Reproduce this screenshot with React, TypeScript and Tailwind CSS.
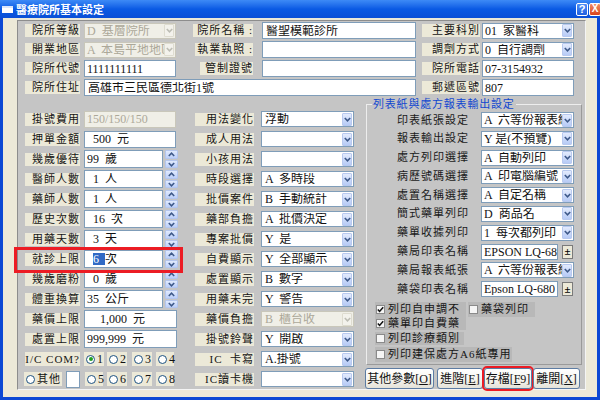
import React from 'react';

type FP = {
  v?: React.ReactNode;
  className?: string;
  dis?: boolean;
  sel?: boolean;
  pad?: string;
};

function Lbl({ t, className = '' }: { t: string; className?: string }) {
  return (
    <div
      className={`h-[13px] shrink-0 bg-[#ece9d8] flex items-center justify-end text-[11px] leading-none tracking-[1px] text-[#151515] whitespace-pre ${className}`}
    >
      {t}
    </div>
  );
}

function Chev({ up = false, dis = false }: { up?: boolean; dis?: boolean }) {
  return (
    <svg width="7" height="5" viewBox="0 0 7 5">
      <polyline
        points={up ? '0.8,4 3.5,1.2 6.2,4' : '0.8,1 3.5,3.8 6.2,1'}
        fill="none"
        stroke={dis ? '#bdbdb4' : '#3f5a8a'}
        strokeWidth="1.6"
      />
    </svg>
  );
}

function Field({ v = '', className = '', dis = false, sel = false, pad = 'pl-[2px]' }: FP) {
  return (
    <div
      className={`shrink-0 border flex items-center overflow-hidden ${
        dis ? 'bg-[#f0efe7] text-[#aca899] border-[#c9c7ba]' : 'bg-white text-[#111] border-[#7f9db9]'
      } ${className}`}
    >
      <div className={`flex-1 min-w-0 overflow-hidden whitespace-pre text-[12px] leading-none ${pad}`}>{v}</div>
      {sel && (
        <div
          className={`w-[10px] h-[13px] mr-[1px] shrink-0 flex items-center justify-center rounded-[1px] ${
            dis ? 'bg-[#f3f2ec] border border-[#dedcd0]' : 'bg-gradient-to-b from-[#e3ebfd] to-[#b7cbf6] border border-[#b8c9ef]'
          }`}
        >
          <Chev dis={dis} />
        </div>
      )}
    </div>
  );
}

function Spin() {
  return (
    <div className="ml-[2px] flex flex-col gap-[1px] shrink-0">
      <div className="w-[13px] h-[9px] rounded-[1px] bg-gradient-to-b from-[#e1eafd] to-[#bccff8] border border-[#b4c6ee] flex items-center justify-center">
        <Chev up />
      </div>
      <div className="w-[13px] h-[8px] rounded-[1px] bg-gradient-to-b from-[#e1eafd] to-[#bccff8] border border-[#b4c6ee] flex items-center justify-center">
        <Chev />
      </div>
    </div>
  );
}

function Radio({ n, on = false, className = '' }: { n: string; on?: boolean; className?: string }) {
  return (
    <div className={`h-[14px] shrink-0 bg-[#ece9d8] flex items-center pl-[2px] ${className}`}>
      <span className="w-[9px] h-[9px] rounded-full border border-[#1c5180] bg-white flex items-center justify-center shrink-0">
        {on && <span className="w-[4px] h-[4px] rounded-full bg-[#21a121]" />}
      </span>
      <span className="ml-[2px] text-[12px] leading-none text-[#111] whitespace-pre">{n}</span>
    </div>
  );
}

function CB({ t, on = false, className = '' }: { t: string; on?: boolean; className?: string }) {
  return (
    <div className={`shrink-0 bg-[#b8b8b8] flex items-center pl-[1px] ${className}`}>
      <span className="w-[9px] h-[9px] border border-[#8a8a8a] bg-[#f5f5f5] flex items-center justify-center shrink-0">
        {on && (
          <svg width="7" height="7" viewBox="0 0 7 7">
            <polyline points="0.8,3.4 2.6,5.4 6.2,1.2" fill="none" stroke="#111" strokeWidth="1.5" />
          </svg>
        )}
      </span>
      <span className="ml-[3px] text-[11px] leading-none tracking-[1px] text-[#151515] whitespace-pre">{t}</span>
    </div>
  );
}

function Btn({ children, className = '' }: { children: React.ReactNode; className?: string }) {
  return (
    <div
      className={`h-[21px] shrink-0 rounded-[3px] border border-[#5d7ca3] bg-gradient-to-b from-white via-[#f7f6f1] to-[#e4e2d8] flex items-center justify-center text-[12px] leading-none text-[#111] whitespace-pre ${className}`}
    >
      {children}
    </div>
  );
}

const mid: [string, string, boolean?][] = [
  ['用法變化', '浮動'],
  ['成人用法', ''],
  ['小孩用法', ''],
  ['時段選擇', 'A  多時段'],
  ['批價案件', 'B  手動統計'],
  ['藥部負擔', 'A  批價決定'],
  ['專案批價', 'Y  是'],
  ['自費顯示', 'Y  全部顯示'],
  ['處置顯示', 'B  數字'],
  ['用藥未完', 'Y  警告'],
  ['藥價負擔', 'B  櫃台收', true],
  ['掛號鈴聲', 'Y  開啟'],
  ['IC  卡寫', 'A.掛號'],
  ['IC讀卡機', ''],
];

const rightSel: [string, string][] = [
  ['印表紙張設定', 'A  六等份報表紙'],
  ['報表輸出設定', 'Y 是(不預覽)'],
  ['處方列印選擇', 'A  自動列印'],
  ['病歷號碼選擇', 'A  印電腦編號'],
  ['處置名稱選擇', 'A  自定名稱'],
  ['簡式藥單列印', 'D  商品名'],
  ['藥單收據列印', '1  每次都列印'],
];

function RRow({ label, children }: { label: string; children: React.ReactNode }) {
  return (
    <div className="flex items-center h-[16px]">
      <div className="w-[102px] flex justify-end text-[11px] leading-none tracking-[1px] text-[#1a1a1a] whitespace-pre">
        {label}
      </div>
      <div className="ml-[12px] flex items-center">{children}</div>
    </div>
  );
}

function PrinterBtn() {
  return (
    <div className="ml-[4px] w-[11px] h-[14px] bg-[#ece9d8] border border-[#7a7a7a] flex items-center justify-center text-[11px] font-bold leading-none text-black">
      ±
    </div>
  );
}

export default function App() {
  return (
    <div className="w-[600px] h-[400px] overflow-hidden flex flex-col bg-[#0c48d4] font-['Liberation_Serif','Noto_Sans_CJK_TC',serif]">
      {/* title bar */}
      <div className="h-[18px] shrink-0 flex items-center bg-gradient-to-b from-[#3d8af6] via-[#0a5ae4] to-[#0a4fd6]">
        <div className="ml-[2px] w-[11px] h-[7px] bg-white border-t-2 border-[#dbe6fb]" />
        <span className="ml-[3px] text-white text-[11px] font-bold leading-none font-['Noto_Sans_CJK_TC',sans-serif]">
          醫療院所基本設定
        </span>
        <div className="ml-auto mr-[-1px] flex gap-[1px]">
          <div className="w-[12px] h-[13px] rounded-[2px] border border-white bg-gradient-to-b from-[#4f8ff7] to-[#1f5fe0] flex items-center justify-center text-white text-[11px] font-bold leading-none font-['Liberation_Sans',sans-serif]">
            ?
          </div>
          <div className="w-[12px] h-[13px] rounded-[2px] border border-white bg-gradient-to-b from-[#f08a62] to-[#d6421b] flex items-center justify-center text-white text-[10px] font-bold leading-none font-['Liberation_Sans',sans-serif]">
            X
          </div>
        </div>
      </div>

      <div className="flex-1 mx-[3px] mb-[3px] bg-[#ece9d8] pl-[14px] pt-[2px]">
        <div className="w-[569px] h-[370px] bg-[#c5c5c5] border border-[#8d8d8d] border-r-[#f4f4f4] border-b-[#f4f4f4] flex flex-col">
          {/* top section */}
          <div className="pt-[1px] pl-[7px] flex flex-col gap-[2px]">
            <div className="flex items-center h-[17px]">
              <Lbl t="院所等級" className="w-[55px]" />
              <Field sel dis v="D  基層院所" className="ml-[4px] w-[92px] h-[16px]" />
              <div className="w-[77px] flex justify-end">
                <Lbl t="院所名稱 :" className="w-[60px]" />
              </div>
              <Field v="醫聖模範診所" pad="pl-[3px]" className="ml-[9px] w-[154px] h-[17px]" />
              <Lbl t="主要科別" className="ml-[6px] w-[58px]" />
              <Field sel v="01  家醫科" className="ml-[2px] w-[92px] h-[16px]" />
            </div>
            <div className="flex items-center h-[17px]">
              <Lbl t="開業地區" className="w-[55px]" />
              <Field sel dis v="A  本島平地地區" className="ml-[4px] w-[92px] h-[16px]" />
              <div className="w-[77px] flex justify-end">
                <Lbl t="執業執照 :" className="w-[58px]" />
              </div>
              <Field className="ml-[9px] w-[154px] h-[17px]" />
              <Lbl t="調劑方式" className="ml-[6px] w-[58px]" />
              <Field sel v="0  自行調劑" className="ml-[2px] w-[92px] h-[16px]" />
            </div>
            <div className="flex items-center h-[17px]">
              <Lbl t="院所代號" className="w-[55px]" />
              <Field v="1111111111" className="ml-[4px] w-[92px] h-[17px]" />
              <div className="w-[77px] flex justify-end">
                <Lbl t="管制證號" className="w-[53px]" />
              </div>
              <Field className="ml-[9px] w-[154px] h-[17px]" />
              <Lbl t="院所電話" className="ml-[6px] w-[58px]" />
              <Field v="07-3154932" className="ml-[2px] w-[92px] h-[17px]" />
            </div>
            <div className="flex items-center h-[17px]">
              <Lbl t="院所住址" className="w-[55px]" />
              <Field v="高雄市三民區德北街1號" pad="pl-[3px]" className="ml-[4px] w-[332px] h-[17px]" />
              <Lbl t="郵遞區號" className="ml-[6px] w-[58px]" />
              <Field v="807" className="ml-[2px] w-[92px] h-[17px]" />
            </div>
          </div>

          {/* lower section */}
          <div className="flex pl-[7px]">
            {/* left column */}
            <div className="w-[153px] shrink-0 pt-[14px] flex flex-col gap-[2px]">
              <div className="flex items-center h-[18px]">
                <Lbl t="掛號費用" className="w-[55px]" />
                <Field dis v="150/150/150" className="ml-[4px] w-[92px] h-[17px]" />
              </div>
              <div className="flex items-center h-[18px]">
                <Lbl t="押單金額" className="w-[55px]" />
                <Field v="500  元" pad="pl-[8px]" className="ml-[4px] w-[92px] h-[17px]" />
              </div>
              <div className="flex items-center h-[18px]">
                <Lbl t="幾歲優待" className="w-[55px]" />
                <Field v="99  歲" className="ml-[4px] w-[79px] h-[18px]" />
                <Spin />
              </div>
              <div className="flex items-center h-[18px]">
                <Lbl t="醫師人數" className="w-[55px]" />
                <Field v="1  人" pad="pl-[8px]" className="ml-[4px] w-[79px] h-[18px]" />
                <Spin />
              </div>
              <div className="flex items-center h-[18px]">
                <Lbl t="藥師人數" className="w-[55px]" />
                <Field v="1  人" pad="pl-[8px]" className="ml-[4px] w-[79px] h-[18px]" />
                <Spin />
              </div>
              <div className="flex items-center h-[18px]">
                <Lbl t="歷史次數" className="w-[55px]" />
                <Field v="16  次" pad="pl-[8px]" className="ml-[4px] w-[79px] h-[18px]" />
                <Spin />
              </div>
              <div className="flex items-center h-[18px]">
                <Lbl t="用藥天數" className="w-[55px]" />
                <Field v="3  天" pad="pl-[8px]" className="ml-[4px] w-[79px] h-[18px]" />
                <Spin />
              </div>
              <div className="relative flex items-center h-[18px]">
                <Lbl t="就診上限" className="w-[55px]" />
                <Field
                  v={
                    <>
                      <span className="bg-[#316ac5] text-white">6  </span>
                      <span>次</span>
                    </>
                  }
                  pad="pl-[8px]"
                  className="ml-[4px] w-[79px] h-[18px]"
                />
                <Spin />
                <div className="absolute -left-[11px] -top-[3px] w-[169px] h-[26px] border-[3px] border-[#ec1c24] pointer-events-none" />
              </div>
              <div className="flex items-center h-[18px]">
                <Lbl t="幾歲磨粉" className="w-[55px]" />
                <Field v="0  歲" pad="pl-[8px]" className="ml-[4px] w-[79px] h-[18px]" />
                <Spin />
              </div>
              <div className="flex items-center h-[18px]">
                <Lbl t="體重換算" className="w-[55px]" />
                <Field v="35  公斤" className="ml-[4px] w-[79px] h-[18px]" />
                <Spin />
              </div>
              <div className="flex items-center h-[18px]">
                <Lbl t="藥價上限" className="w-[55px]" />
                <Field v="1,000  元" pad="pl-[15px]" className="ml-[4px] w-[93px] h-[18px]" />
              </div>
              <div className="flex items-center h-[18px]">
                <Lbl t="處置上限" className="w-[55px]" />
                <Field v="999,999  元" className="ml-[4px] w-[93px] h-[18px]" />
              </div>
              <div className="flex items-center h-[18px]">
                <Lbl t="I/C COM?" className="w-[55px] h-[14px] tracking-[0.5px]" />
                <Radio n="1" on className="ml-[4px] w-[20px]" />
                <Radio n="2" className="ml-[3px] w-[20px]" />
                <Radio n="3" className="ml-[5px] w-[20px]" />
                <Radio n="4" className="ml-[4px] w-[18px]" />
              </div>
              <div className="flex items-center h-[18px]">
                <div className="-ml-[1px] w-[38px] h-[14px] shrink-0 bg-[#ece9d8] flex items-center pl-[2px]">
                  <span className="w-[9px] h-[9px] rounded-full border border-[#1c5180] bg-white shrink-0" />
                  <span className="ml-[2px] text-[11px] leading-none tracking-[1px] text-[#111]">其他</span>
                </div>
                <div className="ml-[4px] w-[14px] h-[17px] bg-white border border-[#7f9db9] shrink-0" />
                <Radio n="5" className="ml-[5px] w-[18px]" />
                <Radio n="6" className="ml-[4px] w-[20px]" />
                <Radio n="7" className="ml-[5px] w-[20px]" />
                <Radio n="8" className="ml-[4px] w-[18px]" />
              </div>
            </div>

            {/* middle column */}
            <div className="ml-[17px] w-[159px] shrink-0 pt-[14px] flex flex-col gap-[2px]">
              {mid.map(([l, v, d]) => (
                <div key={l} className="flex items-center h-[18px]">
                  <Lbl t={l} className="w-[59px]" />
                  <Field sel dis={!!d} v={v} pad="pl-[3px]" className="ml-[7px] w-[93px] h-[16px]" />
                </div>
              ))}
            </div>

            {/* right group */}
            <div className="ml-[11px] w-[220px] shrink-0 pt-[3px] flex flex-col">
              <fieldset className="ml-[1px] w-[216px] border border-[#ededed] border-r-[#9a9a9a] border-b-[#9a9a9a] pb-[2px]">
                <legend className="ml-[5px] px-[1px] text-[11px] leading-[11px] tracking-[0.8px] text-[#1248d0]">
                  列表紙與處方報表輸出設定
                </legend>
                <div className="mt-[2px] flex flex-col gap-[2.8px]">
                  {rightSel.map(([l, v]) => (
                    <RRow key={l} label={l}>
                      <Field sel v={v} className="w-[93px] h-[16px]" />
                    </RRow>
                  ))}
                  <RRow label="藥局印表名稱">
                    <Field v="EPSON LQ-680" className="w-[77px] h-[16px]" />
                    <PrinterBtn />
                  </RRow>
                  <RRow label="藥局報表紙張">
                    <Field sel v="A  六等份報表紙" className="w-[93px] h-[16px]" />
                  </RRow>
                  <RRow label="藥袋印表名稱">
                    <Field v="Epson LQ-680" className="w-[77px] h-[16px]" />
                    <PrinterBtn />
                  </RRow>
                </div>
                <div className="mt-[5px] ml-[8px] flex flex-col">
                  <div className="flex">
                    <CB t="列印自申調不" on className="w-[91px] h-[15px]" />
                    <CB t="藥袋列印" className="ml-[2px] w-[67px] h-[15px]" />
                  </div>
                  <CB t="藥單印自費藥" on className="w-[91px] h-[13px]" />
                  <CB t="列印診療類別" className="mt-[2px] w-[89px] h-[13px]" />
                  <CB t="列印建保處方A6紙專用" className="mt-[2px] w-[137px] h-[15px]" />
                </div>
              </fieldset>
              <div className="mt-[3px] flex">
                <Btn className="w-[69px]">
                  其他參數[<span className="underline">O</span>]
                </Btn>
                <Btn className="ml-[3px] w-[46px]">
                  進階[<span className="underline">E</span>]
                </Btn>
                <Btn className="ml-[1px] w-[48px] outline-2 outline-[#ec1c24]">
                  存檔[<span className="underline">F</span>9]
                </Btn>
                <Btn className="ml-[1px] w-[47px]">
                  離開[<span className="underline">X</span>]
                </Btn>
              </div>
            </div>
          </div>
        </div>
      </div>
    </div>
  );
}
